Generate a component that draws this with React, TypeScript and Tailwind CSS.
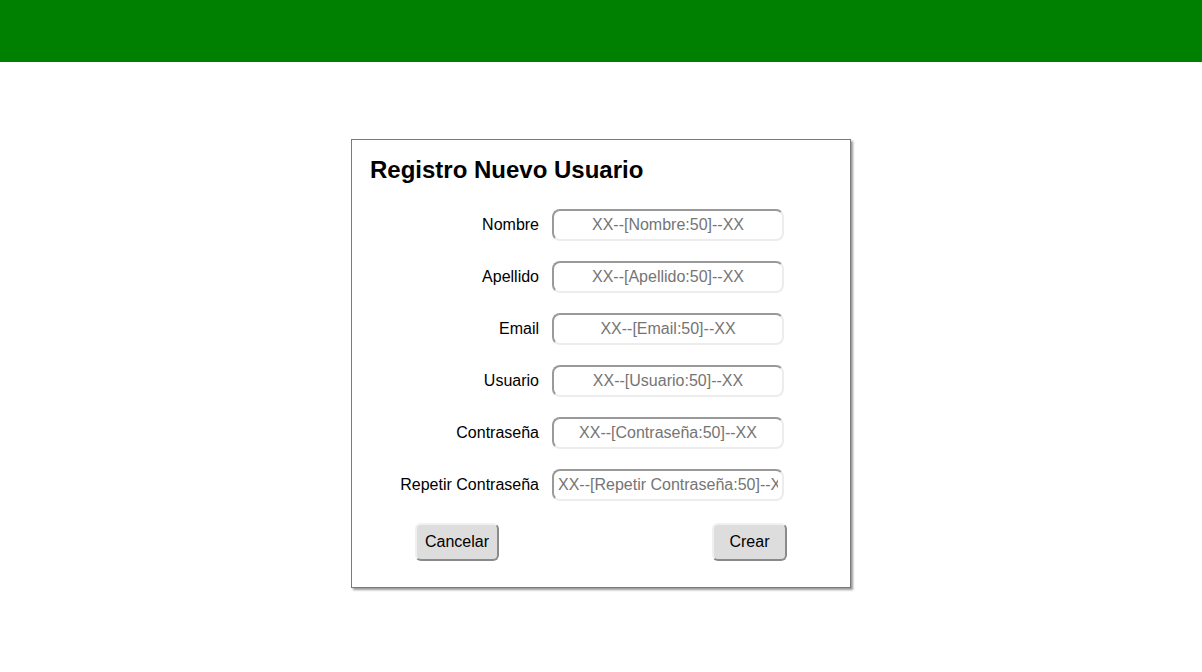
import React from 'react';

const fields = [
  { label: 'Nombre', placeholder: 'XX--[Nombre:50]--XX' },
  { label: 'Apellido', placeholder: 'XX--[Apellido:50]--XX' },
  { label: 'Email', placeholder: 'XX--[Email:50]--XX' },
  { label: 'Usuario', placeholder: 'XX--[Usuario:50]--XX' },
  { label: 'Contraseña', placeholder: 'XX--[Contraseña:50]--XX' },
  { label: 'Repetir Contraseña', placeholder: 'XX--[Repetir Contraseña:50]--XX' },
];

export default function App() {
  return (
    <div className="min-h-screen w-full bg-white font-['Liberation_Sans',Arial,sans-serif] text-black">
      {/* Top bar */}
      <div className="h-[62px] w-full bg-[#008000]" />

      <main className="flex justify-center pt-[77px]">
        <div className="w-[500px] border border-[#7a7a7a] bg-white shadow-[2px_2px_2px_#9a9a9a] pb-[26px]">
          <h1 className="pl-[18px] pt-[16px] text-[24px] font-bold leading-[28px]">Registro Nuevo Usuario</h1>

          <div className="mt-[25px] flex flex-col gap-[20px]">
            {fields.map((f) => (
              <div key={f.label} className="flex items-center">
                <label className="w-[187px] text-right text-[16px] leading-[20px]">{f.label}</label>
                <input
                  type="text"
                  placeholder={f.placeholder}
                  className="ml-[13px] h-[32px] w-[232px] rounded-[8px] border-2 border-t-[#9a9a9a] border-l-[#9a9a9a] border-b-[#ececec] border-r-[#ececec] bg-white px-[4px] text-center text-[16px] placeholder:text-[#757575] outline-none"
                />
              </div>
            ))}
          </div>

          <div className="mt-[22px] flex justify-between pl-[63px] pr-[63px]">
            <button className="h-[38px] w-[84px] rounded-[6px] border-2 border-t-[#f0f0f0] border-l-[#f0f0f0] border-b-[#8a8a8a] border-r-[#8a8a8a] bg-[#dddddd] text-[16px]">
              Cancelar
            </button>
            <button className="h-[38px] w-[75px] rounded-[6px] border-2 border-t-[#f0f0f0] border-l-[#f0f0f0] border-b-[#8a8a8a] border-r-[#8a8a8a] bg-[#dddddd] text-[16px]">
              Crear
            </button>
          </div>
        </div>
      </main>
    </div>
  );
}
